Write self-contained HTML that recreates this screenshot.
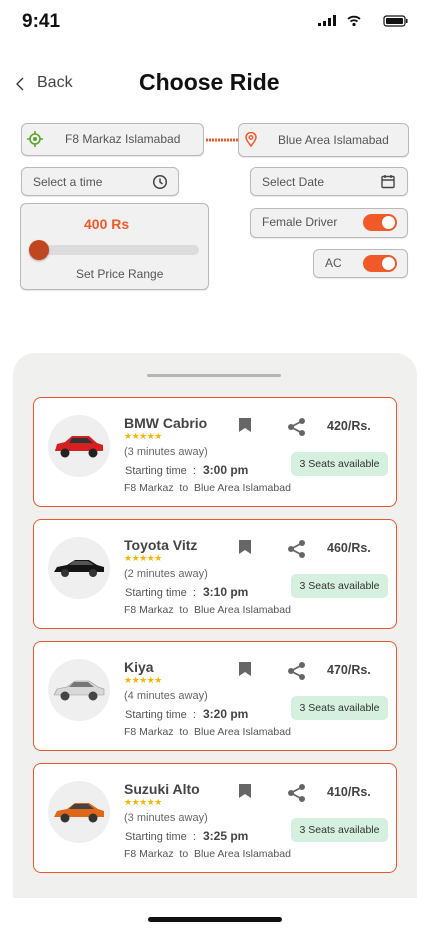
<!DOCTYPE html>
<html><head><meta charset="utf-8"><style>
*{margin:0;padding:0;box-sizing:border-box}
body{width:430px;height:932px;background:#fff;font-family:"Liberation Sans",sans-serif;position:relative;overflow:hidden;color:#333}
.a{position:absolute}
.box{position:absolute;background:#f1f1f1;border:1px solid #b9b9b9;border-radius:6px;box-shadow:0 1px 1px rgba(0,0,0,.1)}
.t{position:absolute;white-space:nowrap}
.tog{position:absolute;width:34px;height:17px;background:#f05a28;border-radius:9px}
.tog::after{content:"";position:absolute;right:2px;top:2px;width:13px;height:13px;border-radius:50%;background:#fff}
.card{position:absolute;left:33px;width:364px;height:110px;background:#fff;border:1px solid #e9572b;border-radius:8px}
.circ{position:absolute;left:14px;top:17px;width:62px;height:62px;border-radius:50%;background:#efefef}
.name{position:absolute;left:90px;top:17px;font-size:14px;font-weight:bold;color:#444}
.stars{position:absolute;left:90px;top:33px;font-size:9px;color:#f5b400;letter-spacing:-0.5px}
.away{position:absolute;left:90px;top:48px;font-size:11px;color:#666}
.st{position:absolute;left:91px;top:65px;font-size:11px;color:#555}
.st b{font-size:12px;color:#444;margin-left:4px}
.rt{position:absolute;left:90px;top:84px;font-size:10.5px;color:#555}
.bm{position:absolute;left:205px;top:20px}
.sh{position:absolute;left:253px;top:19px}
.pr{position:absolute;left:293px;top:21px;font-size:12.5px;font-weight:bold;color:#444}
.seat{position:absolute;left:257px;top:54px;width:97px;height:24px;background:#d5f0de;border-radius:5px;font-size:10.5px;color:#333;text-align:center;line-height:24px}
</style></head><body>
<div class="t" style="left:22px;top:11px;font-size:19px;font-weight:bold;color:#111">9:41</div>
<svg class="a" style="left:318px;top:14px" width="92" height="14" viewBox="0 0 92 14">
<rect x="0" y="9" width="3" height="3" fill="#111"/><rect x="5" y="7" width="3" height="5" fill="#111"/><rect x="10" y="4" width="3" height="8" fill="#111"/><rect x="15" y="1" width="3" height="11" fill="#111"/>
<path d="M30 5a9 9 0 0 1 12 0M32.5 7.5a5.5 5.5 0 0 1 7 0" stroke="#111" stroke-width="1.8" fill="none"/><circle cx="36" cy="10.5" r="1.6" fill="#111"/>
<rect x="66" y="2" width="21" height="10" rx="2.5" fill="none" stroke="#111" stroke-width="1.2"/><rect x="68" y="4" width="17" height="6" rx="1" fill="#111"/><rect x="88" y="5" width="1.5" height="4" fill="#111"/>
</svg>
<svg class="a" style="left:14px;top:76px" width="12" height="16"><path d="M9 2L3 8l6 6" stroke="#333" stroke-width="1.3" fill="none"/></svg>
<div class="t" style="left:37px;top:74px;font-size:16px;color:#444">Back</div>
<div class="t" style="left:139px;top:69px;font-size:23px;font-weight:bold;color:#111">Choose Ride</div>

<div class="box" style="left:21px;top:123px;width:183px;height:33px"></div>
<svg class="a" style="left:27px;top:131px" width="16" height="16"><circle cx="8" cy="8" r="5" stroke="#5aa52a" stroke-width="1.6" fill="none"/><circle cx="8" cy="8" r="2" fill="#5aa52a"/><path d="M8 0v3M8 13v3M0 8h3M13 8h3" stroke="#5aa52a" stroke-width="1.6"/></svg>
<div class="t" style="left:65px;top:132px;font-size:12px;color:#555">F8 Markaz Islamabad</div>
<svg class="a" style="left:206px;top:138px" width="32" height="4"><line x1="0" y1="2" x2="32" y2="2" stroke="#f05a28" stroke-width="3" stroke-dasharray="2 1"/></svg>
<div class="box" style="left:238px;top:123px;width:171px;height:34px"></div>
<svg class="a" style="left:245px;top:132px" width="12" height="16"><path d="M6 14C2 9 1 7 1 5.5a5 5 0 0 1 10 0C11 7 10 9 6 14z" stroke="#f05a28" stroke-width="1.5" fill="none"/><circle cx="6" cy="5.5" r="1.8" stroke="#f05a28" stroke-width="1.3" fill="none"/></svg>
<div class="t" style="left:278px;top:133px;font-size:12px;color:#555">Blue Area Islamabad</div>

<div class="box" style="left:21px;top:167px;width:158px;height:29px"></div>
<div class="t" style="left:33px;top:175px;font-size:12px;color:#555">Select a time</div>
<svg class="a" style="left:152px;top:174px" width="16" height="16"><circle cx="8" cy="8" r="6.3" stroke="#444" stroke-width="1.5" fill="none"/><path d="M8 4.5V8l2.5 2" stroke="#444" stroke-width="1.5" fill="none"/></svg>
<div class="box" style="left:250px;top:167px;width:158px;height:29px"></div>
<div class="t" style="left:262px;top:175px;font-size:12px;color:#555">Select Date</div>
<svg class="a" style="left:381px;top:174px" width="14" height="15"><rect x="1" y="2.5" width="12" height="11" rx="1" stroke="#444" stroke-width="1.4" fill="none"/><path d="M1 6h12M4 1v3M10 1v3" stroke="#444" stroke-width="1.4"/></svg>

<div class="box" style="left:20px;top:203px;width:189px;height:87px"></div>
<div class="t" style="left:84px;top:216px;font-size:14px;font-weight:bold;color:#f05a28">400 Rs</div>
<div class="a" style="left:30px;top:245px;width:169px;height:10px;border-radius:5px;background:#dcdcdc"></div>
<div class="a" style="left:29px;top:240px;width:20px;height:20px;border-radius:50%;background:#c0461f;box-shadow:0 1px 2px rgba(0,0,0,.3)"></div>
<div class="t" style="left:76px;top:267px;font-size:12px;color:#555">Set Price Range</div>

<div class="box" style="left:250px;top:208px;width:158px;height:30px"></div>
<div class="t" style="left:262px;top:215px;font-size:12px;color:#555">Female Driver</div>
<div class="tog" style="left:363px;top:214px"></div>
<div class="box" style="left:313px;top:249px;width:95px;height:29px"></div>
<div class="t" style="left:325px;top:256px;font-size:12px;color:#555">AC</div>
<div class="tog" style="left:363px;top:255px"></div>

<div class="a" style="left:13px;top:353px;width:404px;height:545px;background:#f0f0ee;border-radius:22px 22px 0 0"></div>
<div class="a" style="left:147px;top:374px;width:134px;height:3px;border-radius:2px;background:#b5b5b5"></div>

<div class="card" style="top:397px">
<div class="circ"><svg style="position:absolute;left:4px;top:18px" width="54" height="26" viewBox="0 0 54 26"><path d="M3 18l2-7 8-2 7-6h17l8 7 6 2v6z" fill="#d42020"/><path d="M20 5h15l6 5H17z" fill="#333"/><circle cx="13" cy="20" r="4.5" fill="#222"/><circle cx="41" cy="20" r="4.5" fill="#222"/></svg></div>
<div class="name">BMW Cabrio</div><div class="stars">★★★★★</div>
<div class="away">(3 minutes away)</div><div class="st">Starting time &nbsp;: <b>3:00 pm</b></div>
<div class="rt">F8 Markaz &nbsp;to &nbsp;Blue Area Islamabad</div>
<svg class="bm" width="12" height="14"><path d="M0 0h12v14L6 10 0 14z" fill="#666"/></svg>
<svg class="sh" width="20" height="20"><circle cx="15" cy="4" r="3" fill="#666"/><circle cx="4" cy="10" r="3" fill="#666"/><circle cx="15" cy="16" r="3" fill="#666"/><path d="M15 4L4 10l11 6" stroke="#666" stroke-width="1.8" fill="none"/></svg>
<div class="pr">420/Rs.</div><div class="seat">3 Seats available</div>
</div>

<div class="card" style="top:519px">
<div class="circ"><svg style="position:absolute;left:4px;top:20px" width="54" height="22" viewBox="0 0 54 22"><path d="M2 15l3-5 10-2 8-5h14l8 5 7 2v5z" fill="#151515"/><path d="M22 4h14l6 4H17z" fill="#555"/><circle cx="13" cy="16" r="4" fill="#333"/><circle cx="41" cy="16" r="4" fill="#333"/></svg></div>
<div class="name">Toyota Vitz</div><div class="stars">★★★★★</div>
<div class="away">(2 minutes away)</div><div class="st">Starting time &nbsp;: <b>3:10 pm</b></div>
<div class="rt">F8 Markaz &nbsp;to &nbsp;Blue Area Islamabad</div>
<svg class="bm" width="12" height="14"><path d="M0 0h12v14L6 10 0 14z" fill="#666"/></svg>
<svg class="sh" width="20" height="20"><circle cx="15" cy="4" r="3" fill="#666"/><circle cx="4" cy="10" r="3" fill="#666"/><circle cx="15" cy="16" r="3" fill="#666"/><path d="M15 4L4 10l11 6" stroke="#666" stroke-width="1.8" fill="none"/></svg>
<div class="pr">460/Rs.</div><div class="seat">3 Seats available</div>
</div>

<div class="card" style="top:641px">
<div class="circ"><svg style="position:absolute;left:4px;top:18px" width="54" height="26" viewBox="0 0 54 26"><path d="M2 18l3-6 10-2 8-6h14l9 6 6 2v6z" fill="#d8d8d8" stroke="#999" stroke-width=".6"/><path d="M22 5h14l6 5H17z" fill="#777"/><circle cx="13" cy="19" r="4.5" fill="#444"/><circle cx="41" cy="19" r="4.5" fill="#444"/></svg></div>
<div class="name">Kiya</div><div class="stars">★★★★★</div>
<div class="away">(4 minutes away)</div><div class="st">Starting time &nbsp;: <b>3:20 pm</b></div>
<div class="rt">F8 Markaz &nbsp;to &nbsp;Blue Area Islamabad</div>
<svg class="bm" width="12" height="14"><path d="M0 0h12v14L6 10 0 14z" fill="#666"/></svg>
<svg class="sh" width="20" height="20"><circle cx="15" cy="4" r="3" fill="#666"/><circle cx="4" cy="10" r="3" fill="#666"/><circle cx="15" cy="16" r="3" fill="#666"/><path d="M15 4L4 10l11 6" stroke="#666" stroke-width="1.8" fill="none"/></svg>
<div class="pr">470/Rs.</div><div class="seat">3 Seats available</div>
</div>

<div class="card" style="top:763px">
<div class="circ"><svg style="position:absolute;left:4px;top:18px" width="54" height="26" viewBox="0 0 54 26"><path d="M2 18l3-6 10-2 8-6h14l9 6 6 2v6z" fill="#e0661a"/><path d="M22 5h14l6 5H17z" fill="#444"/><circle cx="13" cy="19" r="4.5" fill="#333"/><circle cx="41" cy="19" r="4.5" fill="#333"/></svg></div>
<div class="name">Suzuki Alto</div><div class="stars">★★★★★</div>
<div class="away">(3 minutes away)</div><div class="st">Starting time &nbsp;: <b>3:25 pm</b></div>
<div class="rt">F8 Markaz &nbsp;to &nbsp;Blue Area Islamabad</div>
<svg class="bm" width="12" height="14"><path d="M0 0h12v14L6 10 0 14z" fill="#666"/></svg>
<svg class="sh" width="20" height="20"><circle cx="15" cy="4" r="3" fill="#666"/><circle cx="4" cy="10" r="3" fill="#666"/><circle cx="15" cy="16" r="3" fill="#666"/><path d="M15 4L4 10l11 6" stroke="#666" stroke-width="1.8" fill="none"/></svg>
<div class="pr">410/Rs.</div><div class="seat">3 Seats available</div>
</div>

<div class="a" style="left:148px;top:917px;width:134px;height:5px;border-radius:3px;background:#111"></div>
</body></html>
